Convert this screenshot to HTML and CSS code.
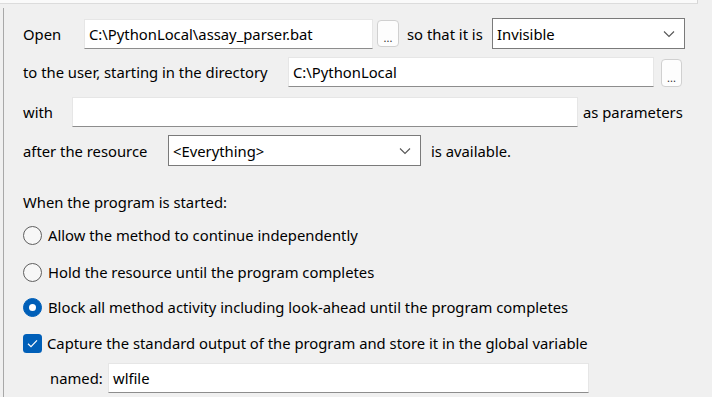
FILE: index.html
```html
<!DOCTYPE html>
<html lang="en">
  <head>
    <meta charset="UTF-8" />
    <meta name="viewport" content="width=device-width, initial-scale=1.0" />
    <title>Run Program</title>
    <link rel="stylesheet" href="styles.css">
  </head>
  <body>
    <div class="topbar"></div>
    <div class="panel">
      <div class="row row-open">
        <span class="label w-open">Open</span>
        <div class="field w-file">C:\PythonLocal\assay_parser.bat</div>
        <button class="browse">...</button>
        <span class="label w-so">so that it is</span>
        <div class="combo w-vis">
          <span>Invisible</span>
          <svg class="chev" width="12" height="8" viewBox="0 0 12 8"><path d="M1 1.5 L6 6.5 L11 1.5" fill="none" stroke="#555" stroke-width="1.1"/></svg>
        </div>
      </div>

      <div class="row row-dir">
        <span class="label w-dir">to the user, starting in the directory</span>
        <div class="field w-path">C:\PythonLocal</div>
        <button class="browse b2">...</button>
      </div>

      <div class="row row-with">
        <span class="label w-with">with</span>
        <div class="field w-params"></div>
        <span class="label after">as parameters</span>
      </div>

      <div class="row row-res">
        <span class="label w-res">after the resource</span>
        <div class="combo w-every">
          <span>&lt;Everything&gt;</span>
          <svg class="chev" width="12" height="8" viewBox="0 0 12 8"><path d="M1 1.5 L6 6.5 L11 1.5" fill="none" stroke="#555" stroke-width="1.1"/></svg>
        </div>
        <span class="label avail">is available.</span>
      </div>

      <div class="line heading">When the program is started:</div>

      <div class="line opt opt1">
        <span class="radio"></span>
        <span>Allow the method to continue independently</span>
      </div>
      <div class="line opt opt2">
        <span class="radio"></span>
        <span>Hold the resource until the program completes</span>
      </div>
      <div class="line opt opt3">
        <span class="radio on"></span>
        <span>Block all method activity including look-ahead until the program completes</span>
      </div>
      <div class="line opt opt4">
        <svg class="check" width="19" height="19" viewBox="0 0 19 19">
          <rect x="0" y="0" width="19" height="19" rx="3.5" fill="#005fb8"/>
          <path d="M5 9.8 L8 12.6 L14 6.4" fill="none" stroke="#fff" stroke-width="1.2"/>
        </svg>
        <span class="cap">Capture the standard output of the program and store it in the global variable</span>
      </div>

      <div class="row row-named">
        <span class="label w-named">named:</span>
        <div class="field w-var">wlfile</div>
      </div>
    </div>
  </body>
</html>
```

FILE: styles.css
```css
body {
  margin: 0;
  background-color: #f0f0f0;
  font-family: 'Noto Sans', 'Open Sans', sans-serif;
  font-size: 14.8px;
  color: #000;
  overflow: hidden;
}
.topbar {
  width: 697px;
  height: 3px;
  background-color: #fafafa;
  border-bottom: 1px solid #dcdcdc;
  border-right: 1px solid #d6d6d6;
}
.panel {
  margin: 4px 0 0 3px;
  border-left: 1px solid #a8a8a8;
  padding: 10px 0 0 19px;
  height: 379px;
  overflow: hidden;
}
.row {
  display: flex;
  align-items: center;
  height: 30px;
}
.label {
  white-space: nowrap;
  flex: none;
}
.field, .combo {
  box-sizing: border-box;
  height: 30px;
  background-color: #fff;
  padding-left: 4px;
  display: flex;
  align-items: center;
  flex: none;
  white-space: nowrap;
}
.field {
  border: 1px solid #e6e6e6;
  border-bottom: 1px solid #8d8d8d;
}
.combo {
  height: 31px;
  border: 1px solid #7a7a7a;
  justify-content: space-between;
  padding-right: 9px;
}
.browse {
  box-sizing: border-box;
  flex: none;
  width: 22px;
  height: 27px;
  margin-left: 4px;
  padding: 0 0 3px;
  border: 1px solid #d0d0d0;
  border-radius: 4px;
  background-color: #fdfdfd;
  font-family: inherit;
  font-size: 11px;
  line-height: 1;
  color: #333;
  display: flex;
  align-items: flex-end;
  justify-content: center;
}

.row-open { height: 31px; }
.w-open { width: 61px; }
.w-file { width: 289px; }
.w-so { margin-left: 8px; width: 85px; }
.w-vis { width: 193px; }

.row-dir { margin-top: 8px; }
.w-dir { width: 265px; }
.w-path { width: 366px; }
.b2 { margin-left: 7px; width: 21px; height: 28px; margin-top: 2px; }

.row-with { margin-top: 10px; }
.w-with { width: 49px; }
.w-params { width: 506px; }
.after { margin-left: 5px; }

.row-res { margin-top: 8px; height: 31px; }
.w-res { width: 145px; }
.w-every { width: 253px; }
.avail { margin-left: 10px; }

.line {
  display: flex;
  align-items: center;
  height: 20px;
  white-space: nowrap;
}
.heading { margin-top: 26px; }
.opt { gap: 6px; }
.opt1 { margin-top: 13px; }
.opt2 { margin-top: 17px; }
.opt3 { margin-top: 15px; }
.opt4 { margin-top: 16px; gap: 5px; }

.radio {
  box-sizing: border-box;
  flex: none;
  width: 19px;
  height: 19px;
  border-radius: 50%;
  border: 1px solid #5f5f5f;
  background-color: #f7f7f7;
  position: relative;
}
.radio.on {
  background-color: #005fb8;
  border-color: #005fb8;
}
.radio.on::after {
  content: '';
  position: absolute;
  left: 5px;
  top: 5px;
  width: 7px;
  height: 7px;
  border-radius: 50%;
  background-color: #fff;
}
.check { flex: none; }

.row-named { margin-top: 10px; }
.w-named { margin-left: 27px; width: 58px; }
.w-var { width: 481px; }
```
